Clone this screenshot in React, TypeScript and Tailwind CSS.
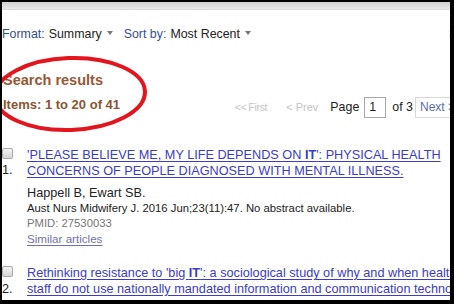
import React from "react";

const Tri = () => (
  <span className="inline-block w-0 h-0 border-l-[3.5px] border-r-[3.5px] border-t-[4px] border-l-transparent border-r-transparent border-t-[#777] ml-[5px] mb-[2px]" />
);

const Checkbox = () => (
  <div className="w-[11px] h-[11px] rounded-[2px] border border-[#a9a9a9] bg-gradient-to-b from-[#f4f4f4] to-[#d6d6d6]" />
);

export default function App() {
  return (
    <div
      className="w-[454px] h-[304px] bg-black pl-[2px] pt-[2px] pr-[4px] pb-[4px]"
      style={{ fontFamily: '"Liberation Sans", Arial, sans-serif' }}
    >
      <div className="relative w-full h-full bg-white overflow-hidden">
        <div className="h-[8px] bg-gradient-to-b from-[#d0d0d0] to-[#e6e6e6] border-b border-[#dcdcdc]" />

        {/* Format row */}
        <div className="mt-[16px] flex items-center h-[16px] text-[12.4px] leading-[16px] whitespace-nowrap">
          <span className="text-[#35508f]">Format:</span>
          <span className="ml-[4px] text-[#222]">Summary</span>
          <Tri />
          <span className="ml-[11px] text-[#35508f]">Sort by:</span>
          <span className="ml-[4px] text-[#222]">Most Recent</span>
          <Tri />
          <span className="ml-[198px] text-[#333]">Send to:</span>
        </div>

        {/* Heading + pagination */}
        <div className="mt-[29px] flex justify-between items-start whitespace-nowrap">
          <div className="pl-[1px]">
            <div className="text-[14.5px] leading-[18px] font-bold text-[#985735]">Search results</div>
            <div className="mt-[8px] text-[13px] leading-[16px] font-bold text-[#8a5530]">Items: 1 to 20 of 41</div>
          </div>
          <div className="pt-[26px] flex items-center text-[12.4px] mr-[-12px]">
            <span className="text-[10.5px] tracking-[-0.3px] text-[#c4c4c4]">&lt;&lt;&#8201;First</span>
            <span className="ml-[19px] text-[11px] text-[#c4c4c4]">&lt; Prev</span>
            <span className="ml-[12px] text-[#222]">Page</span>
            <div className="ml-[5px] w-[22px] h-[21px] border border-[#a8a8a8] pl-[4px] leading-[19px] text-[#222]">1</div>
            <span className="ml-[6px] text-[#222]">of 3</span>
            <div className="ml-[2px] h-[21px] border border-[#d8d8d8] pl-[4px] pr-[6px] leading-[19px] text-[12px] text-[#5a6ea8]">Next &gt;</div>
          </div>
        </div>

        {/* Result 1 */}
        <div className="mt-[29px] flex whitespace-nowrap">
          <div className="w-[25px] shrink-0 flex flex-col">
            <div className="mt-[1px]"><Checkbox /></div>
            <div className="mt-[3px] text-[12.7px] leading-[16px] text-[#222]">1.</div>
          </div>
          <div className="flex flex-col">
            <div className="text-[12.7px] leading-[16px] text-[#3c3cc4] underline underline-offset-[2px]">
              <div>'PLEASE BELIEVE ME, MY LIFE DEPENDS ON <b>IT</b>': PHYSICAL HEALTH</div>
              <div>CONCERNS OF PEOPLE DIAGNOSED WITH MENTAL ILLNESS.</div>
            </div>
            <div className="mt-[6px] text-[12.7px] leading-[16px] text-[#222]">Happell B, Ewart SB.</div>
            <div className="text-[11.3px] leading-[15px] text-[#222]">Aust Nurs Midwifery J. 2016 Jun;23(11):47. No abstract available.</div>
            <div className="text-[11.3px] leading-[15px] text-[#777]">PMID: 27530033</div>
            <div className="text-[11.6px] leading-[16px] text-[#7070b0] underline underline-offset-[2px]">Similar articles</div>
          </div>
        </div>

        {/* Result 2 */}
        <div className="mt-[18px] flex whitespace-nowrap">
          <div className="w-[25px] shrink-0 flex flex-col">
            <div className="mt-[1px]"><Checkbox /></div>
            <div className="mt-[4px] text-[12.7px] leading-[16px] text-[#222]">2.</div>
          </div>
          <div className="text-[12.7px] leading-[16px] text-[#3c3cc4] underline underline-offset-[2px]">
            <div>Rethinking resistance to 'big <b>IT</b>': a sociological study of why and when healthcare</div>
            <div>staff do not use nationally mandated information and communication technology</div>
          </div>
        </div>

        {/* Red ellipse annotation */}
        <svg className="absolute left-0 top-0 pointer-events-none" width="448" height="298" viewBox="0 0 448 298">
          <ellipse cx="68" cy="92" rx="75" ry="36" fill="none" stroke="#e3151f" strokeWidth="4" transform="rotate(-2 68 92)" />
        </svg>
      </div>
    </div>
  );
}
